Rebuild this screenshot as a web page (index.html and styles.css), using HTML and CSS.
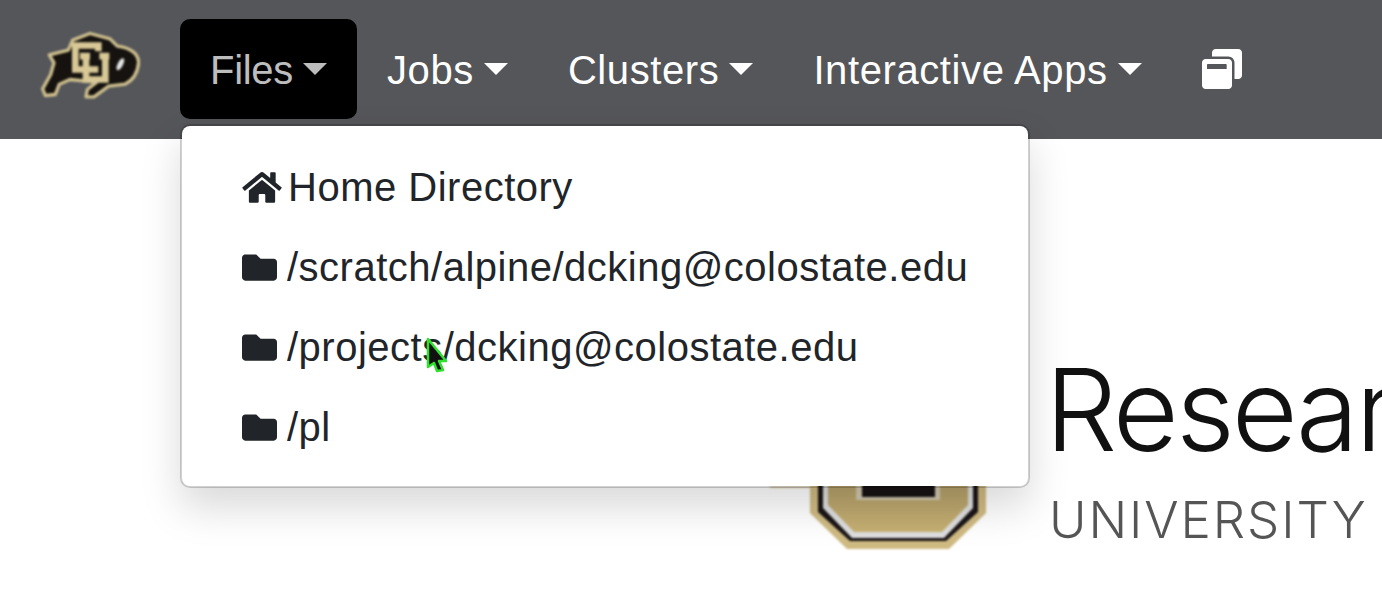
FILE: index.html
```html
<!DOCTYPE html>
<html lang="en">
<head>
  <meta charset="UTF-8">
  <title>Research Computing OnDemand</title>
  <link rel="stylesheet" href="styles.css">
</head>
<body>

  <!-- Barra superior -->
  <header class="navbar">
    <a class="brand" href="#">
      <svg class="brand-logo" viewBox="30 20 300 230">
        <path class="buff-body" d="M180 42L240 58L262 80Q322 88 326 128Q322 176 285 194L236 200L192 232L168 232L172 210L200 188L120 180L88 194L76 225L46 228L38 208L62 165L72 130L58 106L115 92L128 62Z"/>
        <path class="buff-letter" d="M205 95V78H136V150H205"/>
        <path class="buff-letter" d="M150 110H180M168 110V180H226V110M208 110H238"/>
        <ellipse class="buff-eye" cx="271" cy="134" rx="8" ry="20" transform="rotate(28 271 134)"/>
      </svg>
    </a>

    <ul class="nav">
      <li class="nav-item">
        <a class="nav-link nav-link-open dropdown-toggle" href="#">Files</a>

        <ul class="dropdown-menu">
          <li><a class="dropdown-item" href="#">
            <svg class="icon icon-home" viewBox="0 0 576 512"><path d="M280.37 148.26L96 300.11V464a16 16 0 0 0 16 16l112.06-.29a16 16 0 0 0 15.92-16V368a16 16 0 0 1 16-16h64a16 16 0 0 1 16 16v95.64a16 16 0 0 0 16 16.05L464 480a16 16 0 0 0 16-16V300L295.67 148.26a12.19 12.19 0 0 0-15.3 0zM571.6 251.47L488 182.56V44.05a12 12 0 0 0-12-12h-56a12 12 0 0 0-12 12v72.61L318.47 43a48 48 0 0 0-61 0L4.34 251.47a12 12 0 0 0-1.6 16.9l25.5 31A12 12 0 0 0 45.15 301l235.22-193.74a12.19 12.19 0 0 1 15.3 0L530.9 301a12 12 0 0 0 16.9-1.6l25.5-31a12 12 0 0 0-1.7-16.93z"/></svg>
            Home Directory</a></li>
          <li><a class="dropdown-item" href="#">
            <svg class="icon" viewBox="0 0 512 512"><path d="M464 128H272l-64-64H48C21.49 64 0 85.49 0 112v288c0 26.51 21.49 48 48 48h416c26.51 0 48-21.49 48-48V176c0-26.51-21.49-48-48-48z"/></svg>
            /scratch/alpine/dcking@colostate.edu</a></li>
          <li><a class="dropdown-item" href="#">
            <svg class="icon" viewBox="0 0 512 512"><path d="M464 128H272l-64-64H48C21.49 64 0 85.49 0 112v288c0 26.51 21.49 48 48 48h416c26.51 0 48-21.49 48-48V176c0-26.51-21.49-48-48-48z"/></svg>
            /projects/dcking@colostate.edu</a></li>
          <li><a class="dropdown-item" href="#">
            <svg class="icon" viewBox="0 0 512 512"><path d="M464 128H272l-64-64H48C21.49 64 0 85.49 0 112v288c0 26.51 21.49 48 48 48h416c26.51 0 48-21.49 48-48V176c0-26.51-21.49-48-48-48z"/></svg>
            /pl</a></li>
        </ul>
      </li>
      <li class="nav-item"><a class="nav-link dropdown-toggle" href="#">Jobs</a></li>
      <li class="nav-item"><a class="nav-link dropdown-toggle" href="#">Clusters</a></li>
      <li class="nav-item"><a class="nav-link dropdown-toggle" href="#">Interactive Apps</a></li>
      <li class="nav-item">
        <a class="nav-link nav-link-icon" href="#">
          <svg class="icon-sessions" viewBox="0 0 512 512"><path d="M512 48v288c0 26.5-21.5 48-48 48h-48V176c0-44.1-35.9-80-80-80H128V48c0-26.5 21.5-48 48-48h288c26.5 0 48 21.5 48 48zM384 176v288c0 26.5-21.5 48-48 48H48c-26.5 0-48-21.5-48-48V176c0-26.5 21.5-48 48-48h288c26.5 0 48 21.5 48 48zm-68 28c0-6.6-5.4-12-12-12H76c-6.6 0-12 5.4-12 12v52h252v-52z"/></svg>
        </a>
      </li>
    </ul>
  </header>

  <!-- Logo de la portada -->
  <main class="hero">
    <svg class="hero-shield" viewBox="0 0 220 220">
      <defs>
        <linearGradient id="oro" x1="0" y1="0" x2="0" y2="1">
          <stop offset="0.7" stop-color="#b09c68"/>
          <stop offset="1" stop-color="#c6b072"/>
        </linearGradient>
      </defs>
      <rect class="shield-wing" x="0" y="145" width="40" height="2"/>
      <path class="shield-gold" d="M40 0H216V172L179 208H77L40 172Z"/>
      <path class="shield-black" d="M48 0H208V171L176 200H80L48 171Z"/>
      <path class="shield-white" d="M53 0H203V167L174 197H82L53 167Z"/>
      <path class="shield-fill" fill="url(#oro)" d="M58 0H198V164L172 191H84L58 164Z"/>
      <rect class="shield-inner-edge" x="86" y="0" width="84" height="159"/>
      <rect class="shield-inner" x="92" y="0" width="73" height="156"/>
    </svg>
    <div class="hero-text">
      <div class="hero-title">Research</div>
      <div class="hero-sub">UNIVERSITY</div>
    </div>
  </main>

  <!-- Puntero del ratón -->
  <svg class="cursor" viewBox="0 0 24 36">
    <path d="M3 2L21 24L14 24L18 33L12 34L9 26L3 30Z"/>
  </svg>

</body>
</html>
```

FILE: styles.css
```css
* {
  box-sizing: border-box;
}

body {
  margin: 0;
  height: 593px;
  overflow: hidden;
  font-family: "Liberation Sans", Arial, sans-serif;
  font-size: 40px;
  line-height: 60px;
  color: #212529;
  background-color: #fff;
}

a {
  color: inherit;
  text-decoration: none;
}

ul {
  list-style: none;
  margin: 0;
  padding: 0;
}

.navbar {
  display: flex;
  align-items: center;
  height: 139px;
  padding: 0 40px 1px;
  background-color: #55565a;
}

.brand {
  display: flex;
  margin: 0 40px 9px 0;
}

.brand-logo {
  width: 100px;
  height: 77px;
  filter: blur(0.9px);
}

.buff-body {
  fill: #15120f;
  stroke: #cfc08e;
  stroke-width: 10;
  stroke-linejoin: round;
}

.buff-letter {
  fill: none;
  stroke: #d8c896;
  stroke-width: 20;
}

.buff-eye {
  fill: #e4e4e4;
}

.nav {
  display: flex;
}

.nav-item {
  position: relative;
}

.nav-link {
  display: block;
  padding: 21px 30px 19px;
  border-radius: 10px;
  color: #fff;
  letter-spacing: 0.6px;
  white-space: nowrap;
}

.nav-link-open {
  background-color: #000;
  color: #bdbdbd;
  letter-spacing: -0.3px;
}

.nav-link-icon {
  padding: 20px 30px;
}

.dropdown-toggle::after {
  content: "";
  display: inline-block;
  margin-left: 10px;
  vertical-align: 9px;
  border-top: 12px solid;
  border-right: 12px solid transparent;
  border-left: 12px solid transparent;
}

.icon-sessions {
  display: block;
  width: 40px;
  height: 60px;
  fill: #fff;
}

.dropdown-menu {
  position: absolute;
  top: 105px;
  left: 0;
  z-index: 10;
  width: 850px;
  padding: 21px 0 19px;
  background-color: #fff;
  border: 2px solid rgba(0, 0, 0, 0.18);
  border-radius: 10px;
  background-clip: padding-box;
  box-shadow: 0 20px 40px rgba(0, 0, 0, 0.15);
}

.dropdown-item {
  display: flex;
  align-items: center;
  gap: 10px;
  padding: 10px 60px;
  letter-spacing: 0.5px;
  white-space: nowrap;
}

.icon {
  flex: none;
  width: 35px;
  height: 35px;
  fill: #212529;
}

.icon-home {
  width: 40px;
  margin-right: -4px;
}

.hero {
  display: flex;
  padding: 202px 0 0 770px;
  white-space: nowrap;
}

.hero-shield {
  flex: none;
  width: 220px;
  height: 220px;
  filter: blur(0.8px);
}

.shield-wing {
  fill: #d8cba8;
}

.shield-gold {
  fill: #cfba82;
}

.shield-black {
  fill: #1a1516;
}

.shield-white {
  fill: #dedede;
}

.shield-inner-edge {
  fill: #cfc7ae;
}

.shield-inner {
  fill: #171113;
}

.hero-text {
  flex: none;
  margin-left: 59px;
  padding-top: 4px;
  font-family: "Inter", "Liberation Sans", sans-serif;
  font-weight: 300;
  filter: blur(0.6px);
}

.hero-title {
  margin-left: -4px;
  font-size: 114px;
  line-height: 130px;
  letter-spacing: -3px;
  color: #111;
}

.hero-sub {
  margin-top: 15px;
  font-size: 51px;
  line-height: 60px;
  letter-spacing: 1.9px;
  color: #555;
}

.cursor {
  position: absolute;
  left: 425px;
  top: 337px;
  z-index: 20;
  width: 24px;
  height: 36px;
  fill: #111;
  stroke: #2fe02f;
  stroke-width: 2.5;
  stroke-linejoin: round;
}
```
